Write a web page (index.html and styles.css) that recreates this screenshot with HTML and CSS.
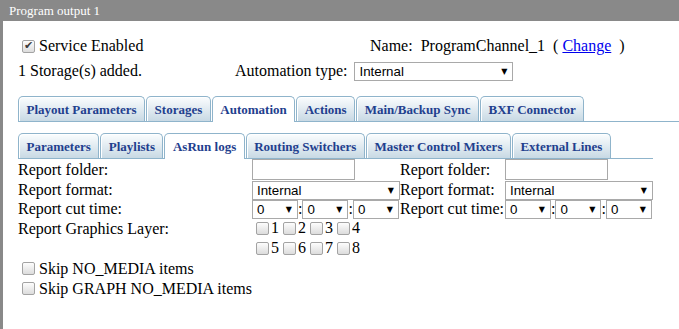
FILE: index.html
```html
<!DOCTYPE html>
<html>
<head>
<meta charset="utf-8">
<title>Program output 1</title>
<link rel="stylesheet" href="styles.css">
</head>
<body>
<div class="window">
  <div class="title">Program output 1</div>
  <div class="body">
    <div class="info">
      <div class="cell"><label class="chk"><input type="checkbox" checked>Service Enabled</label></div>
      <div class="cell name">Name:&nbsp; ProgramChannel_1&nbsp; (&nbsp; <a href="#">Change</a>&nbsp; )</div>
      <div class="cell">1 Storage(s) added.</div>
      <div class="cell auto">Automation type:<span class="sel"><select class="w-auto"><option>Internal</option></select></span></div>
    </div>

    <ul class="tabs main">
      <li class="tab">Playout Parameters</li>
      <li class="tab">Storages</li>
      <li class="tab active">Automation</li>
      <li class="tab">Actions</li>
      <li class="tab">Main/Backup Sync</li>
      <li class="tab">BXF Connector</li>
    </ul>

    <div class="panel">
      <ul class="tabs sub">
        <li class="tab">Parameters</li>
        <li class="tab">Playlists</li>
        <li class="tab active">AsRun logs</li>
        <li class="tab">Routing Switchers</li>
        <li class="tab">Master Control Mixers</li>
        <li class="tab">External Lines</li>
      </ul>

      <table class="form">
        <colgroup>
          <col class="c1"><col class="c2"><col class="c3"><col class="c4">
        </colgroup>
        <tr>
          <td>Report folder:</td>
          <td><input type="text" class="txt"></td>
          <td>Report folder:</td>
          <td><input type="text" class="txt"></td>
        </tr>
        <tr>
          <td>Report format:</td>
          <td><span class="sel"><select class="w-fmt"><option>Internal</option></select></span></td>
          <td>Report format:</td>
          <td><span class="sel"><select class="w-fmt"><option>Internal</option></select></span></td>
        </tr>
        <tr>
          <td>Report cut time:</td>
          <td class="time"><span class="sel"><select class="w-t"><option>0</option></select></span>:<span class="sel"><select class="w-t"><option>0</option></select></span>:<span class="sel"><select class="w-t"><option>0</option></select></span></td>
          <td>Report cut time:</td>
          <td class="time"><span class="sel"><select class="w-t"><option>0</option></select></span>:<span class="sel"><select class="w-t"><option>0</option></select></span>:<span class="sel"><select class="w-t"><option>0</option></select></span></td>
        </tr>
        <tr>
          <td>Report Graphics Layer:</td>
          <td class="layers"><label><input type="checkbox">1</label><label><input type="checkbox">2</label><label><input type="checkbox">3</label><label><input type="checkbox">4</label></td>
          <td></td>
          <td></td>
        </tr>
        <tr>
          <td></td>
          <td class="layers"><label><input type="checkbox">5</label><label><input type="checkbox">6</label><label><input type="checkbox">7</label><label><input type="checkbox">8</label></td>
          <td></td>
          <td></td>
        </tr>
      </table>

      <label class="chk line"><input type="checkbox">Skip NO_MEDIA items</label>
      <label class="chk line"><input type="checkbox">Skip GRAPH NO_MEDIA items</label>
    </div>
  </div>
</div>
</body>
</html>
```

FILE: styles.css
```css
html, body {
  margin: 0;
  padding: 0;
  background: #fff;
}

body {
  font-family: "Liberation Serif", "Times New Roman", serif;
  font-size: 16px;
  color: #000;
}

.window {
  width: 679px;
  height: 329px;
  display: flex;
  flex-direction: column;
  overflow: hidden;
}

.title {
  flex: none;
  background: #898989;
  color: #fff;
  font-size: 13px;
  height: 21px;
  line-height: 21px;
  padding-left: 9px;
}

.body {
  flex: 1;
  border-left: 3px solid #898989;
  padding: 15px 0 0 15px;
}

/* top info */
.info {
  display: grid;
  grid-template-columns: 217px 135px auto;
  row-gap: 5px;
}

.cell {
  height: 20px;
  display: flex;
  align-items: center;
  white-space: nowrap;
}

.name {
  grid-column: 3;
}

.auto {
  grid-column: 2 / span 2;
}

.auto .sel {
  margin-left: 7px;
}

a {
  color: #0000ee;
}

/* checkboxes */
input[type="checkbox"] {
  appearance: none;
  -webkit-appearance: none;
  width: 13px;
  height: 13px;
  margin: 3px 3px 3px 4px;
  border: 1px solid #a3a3a3;
  border-radius: 2px;
  background: linear-gradient(#fdfdfd, #dcdcdc);
  position: relative;
  flex: none;
  box-sizing: border-box;
}

input[type="checkbox"]:checked::after {
  content: "\2714";
  position: absolute;
  left: 1px;
  top: -2px;
  font-size: 11px;
  line-height: 14px;
  color: #3c3c3c;
  font-family: "DejaVu Sans", sans-serif;
}

.chk {
  display: flex;
  align-items: center;
}

.chk input {
  margin-right: 4px;
}

.chk.line {
  height: 20px;
}

/* selects */
.sel {
  display: inline-block;
  position: relative;
  vertical-align: middle;
}

.sel::after {
  content: "\25BC";
  position: absolute;
  right: 6px;
  top: 5px;
  font-size: 8px;
  line-height: 9px;
  font-family: "DejaVu Sans", sans-serif;
  color: #000;
  pointer-events: none;
}

select {
  appearance: none;
  -webkit-appearance: none;
  display: block;
  height: 19px;
  margin: 0;
  padding: 0 0 0 4px;
  border: 1px solid #a9a9a9;
  border-radius: 0;
  background: #fff;
  font-family: "Liberation Sans", Arial, sans-serif;
  font-size: 13.333px;
  color: #000;
  box-sizing: border-box;
}

.w-auto { width: 159px; }
.w-fmt { width: 148px; }
.w-t { width: 46px; }

.txt {
  display: block;
  width: 103px;
  height: 21px;
  margin: 0;
  border: 1px solid #a9a9a9;
  box-sizing: border-box;
  font-size: 13px;
}

/* tabs */
.tabs {
  display: flex;
  list-style: none;
  margin: 15px 0 0;
  padding: 0;
  border-bottom: 1px solid #8fb4cb;
}

.tabs.sub {
  margin-top: 11px;
}

.tab {
  font-size: 13px;
  font-weight: bold;
  line-height: 15px;
  color: #1f408e;
  padding: 5px 7.5px 4px;
  margin-right: 1px;
  border: 1px solid #8fb4cb;
  border-bottom: 0;
  border-radius: 5px 5px 0 0;
  background: linear-gradient(#fbfdfe, #c8d9e4);
  box-shadow: inset 1px 1px 0 #fff;
  white-space: nowrap;
}

.tab.active {
  background: #fff;
  margin-bottom: -1px;
  padding-bottom: 5px;
}

/* form */
.panel {
  display: inline-block;
  vertical-align: top;
}

.form {
  border-collapse: collapse;
  table-layout: fixed;
  width: 635px;
}

.form td {
  padding: 0;
  vertical-align: middle;
  white-space: nowrap;
}

.c1 { width: 234px; }
.c2 { width: 148px; }
.c3 { width: 105px; }
.c4 { width: 148px; }

.time {
  display: flex;
  align-items: center;
}

.layers {
  height: 20px;
}

.layers label {
  display: inline-flex;
  align-items: center;
}

.layers input {
  margin: 3px 2px 3px 4px;
}
```
